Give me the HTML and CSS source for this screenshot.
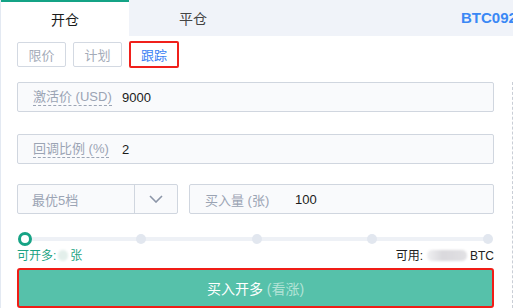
FILE: index.html
```html
<!DOCTYPE html>
<html lang="zh-CN">
<head>
    <meta charset="UTF-8">
    <meta name="viewport" content="width=device-width, initial-scale=1.0">
    <title>开仓</title>
    <link rel="stylesheet" href="styles.css">
</head>
<body>
    <div class="trade-panel">
        <div class="tabs">
            <div class="tab tab-active">开仓</div>
            <div class="tab-rest">
                <div class="tab">平仓</div>
                <div class="symbol">BTC0925</div>
            </div>
        </div>

        <div class="order-types">
            <button class="type-btn">限价</button>
            <button class="type-btn">计划</button>
            <button class="type-btn type-active">跟踪</button>
        </div>

        <div class="form-body">
            <div class="field">
                <span class="field-label"><span class="hint">激活价 (USD)</span></span>
                <span class="field-value">9000</span>
            </div>
            <div class="field field-second">
                <span class="field-label"><span class="hint">回调比例 (%)</span></span>
                <span class="field-value">2</span>
            </div>

            <div class="field-row">
                <div class="select-box">
                    <span class="select-text">最优5档</span>
                    <span class="select-arrow">
                        <svg width="14" height="8" viewBox="0 0 14 8"><path d="M1 1l6 6 6-6" fill="none" stroke="#8c96a8" stroke-width="1.6"/></svg>
                    </span>
                </div>
                <div class="field field-qty">
                    <span class="field-label">买入量 (张)</span>
                    <span class="field-value">100</span>
                </div>
            </div>

            <div class="slider">
                <div class="slider-track"></div>
                <span class="stop"><span class="knob"></span></span>
                <span class="stop"><span class="dot"></span></span>
                <span class="stop"><span class="dot"></span></span>
                <span class="stop"><span class="dot"></span></span>
                <span class="stop"><span class="dot"></span></span>
            </div>

            <div class="info-row">
                <span class="can-open">可开多:<span class="blur blur-small"></span>张</span>
                <span class="available">可用:<span class="blur blur-wide"></span>BTC</span>
            </div>

            <button class="submit-btn">买入开多 <span class="submit-sub">(看涨)</span></button>
        </div>
    </div>
</body>
</html>
```

FILE: styles.css
```css
body {
    margin: 0;
    font-family: "Liberation Sans", "Noto Sans CJK SC", sans-serif;
    background-color: #fff;
    overflow: hidden;
}
.trade-panel {
    width: 513px;
    height: 308px;
    border-left: 1px solid #e3e9f2;
    box-sizing: border-box;
}
.tabs {
    display: flex;
    height: 36px;
}
.tab {
    width: 128px;
    display: flex;
    align-items: center;
    justify-content: center;
    font-size: 14px;
    color: #333;
}
.tab-active {
    border-top: 2px solid #14a386;
    box-sizing: border-box;
    color: #1c1c1c;
}
.tab-rest {
    flex: 1;
    display: flex;
    background-color: #f0f3f9;
    position: relative;
    overflow: hidden;
}
.tab-rest .tab {
    color: #444;
}
.symbol {
    position: absolute;
    left: 332px;
    top: 9px;
    font-size: 15px;
    font-weight: bold;
    color: #3a88f5;
    white-space: nowrap;
}
.order-types {
    display: flex;
    gap: 7px;
    padding: 6px 0 0 16px;
    height: 25px;
}
.type-btn {
    width: 49px;
    height: 25px;
    padding: 0;
    border: 1px solid #d3d9e2;
    border-radius: 2px;
    background-color: #fff;
    font-family: inherit;
    font-size: 13px;
    color: #a4abb8;
}
.type-active {
    width: 50px;
    height: 27px;
    margin-top: -1px;
    border: 2px solid #f0201b;
    color: #3b7ff4;
}
.form-body {
    margin-top: 15px;
    height: 226px;
    border-right: 1px dashed #c9ced6;
    padding: 0 18px 0 16px;
}
.field {
    height: 30px;
    border: 1px solid #d0d6df;
    border-radius: 2px;
    background-color: #f9fafc;
    box-sizing: border-box;
    display: flex;
    align-items: center;
    font-size: 13px;
}
.field-second {
    margin-top: 22px;
}
.field-label {
    margin-left: 15px;
    width: 89px;
    flex-shrink: 0;
    color: #9ba4b4;
}
.hint {
    border-bottom: 1px dashed #9ba4b4;
    line-height: 16px;
    display: inline-block;
}
.field-value {
    color: #1b1b1b;
}
.field-row {
    display: flex;
    gap: 11px;
    margin-top: 20px;
}
.select-box {
    width: 161px;
    height: 30px;
    border: 1px solid #d0d6df;
    border-radius: 2px;
    background-color: #f9fafc;
    box-sizing: border-box;
    display: flex;
    font-size: 13px;
    color: #9ba4b4;
}
.select-text {
    width: 117px;
    display: flex;
    align-items: center;
    padding-left: 14px;
    box-sizing: border-box;
    border-right: 1px solid #d0d6df;
}
.select-arrow {
    flex: 1;
    display: flex;
    align-items: center;
    justify-content: center;
}
.field-qty {
    flex: 1;
}
.field-qty .field-label {
    width: 90px;
}
.slider {
    position: relative;
    height: 14px;
    margin: 18px 6px 0 8px;
    display: flex;
    justify-content: space-between;
    align-items: center;
}
.slider-track {
    position: absolute;
    left: 0;
    right: 0;
    top: 5px;
    height: 4px;
    background-color: #eef1f6;
}
.stop {
    width: 0;
    display: flex;
    justify-content: center;
    position: relative;
}
.knob,
.dot {
    flex-shrink: 0;
    border-radius: 50%;
    box-sizing: border-box;
}
.knob {
    width: 14px;
    height: 14px;
    border: 3px solid #17a385;
    background-color: #fff;
}
.dot {
    width: 10px;
    height: 10px;
    background-color: #e2e7ef;
}
.info-row {
    display: flex;
    justify-content: space-between;
    font-size: 12px;
    margin-top: 1px;
    height: 18px;
    line-height: 18px;
}
.can-open {
    color: #1aa383;
}
.available {
    color: #222;
}
.blur {
    display: inline-block;
    vertical-align: middle;
    height: 11px;
    border-radius: 5px;
    filter: blur(1px);
}
.blur-small {
    width: 10px;
    margin: 0 2px 2px 2px;
    background-color: #e3efeb;
}
.blur-wide {
    width: 40px;
    margin: 0 3px 2px 4px;
    background: linear-gradient(90deg, #f0f0f2, #d9d8dc 40%, #e2e1e4);
}
.submit-btn {
    display: block;
    width: 100%;
    height: 40px;
    margin-top: 3px;
    border: 2.5px solid #f01d17;
    border-radius: 3px;
    background-color: #56c1aa;
    color: #fff;
    font-family: inherit;
    font-size: 14px;
    cursor: pointer;
}
.submit-sub {
    color: #b2e3d6;
}
```
